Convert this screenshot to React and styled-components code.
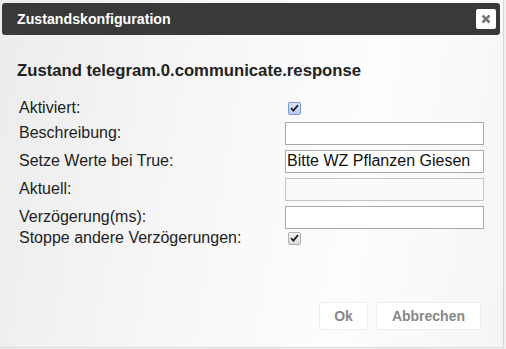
import styled, { createGlobalStyle } from "styled-components";

const Global = createGlobalStyle`
  html, body {
    margin: 0;
    padding: 0;
    background: #f0f0f0;
    font-family: "Liberation Sans", Arial, sans-serif;
  }
`;

const Dialog = styled.div`
  box-sizing: border-box;
  width: 504px;
  height: 348px;
  padding: 3px 3px 0 2px;
  border-right: 1px solid #d6d6d6;
  border-bottom: 1px solid #dcdcdc;
  background: linear-gradient(100deg, #ececec 0%, #f6f6f6 35%, #fdfdfd 70%, #f5f5f5 100%);
  display: flex;
  flex-direction: column;
`;

const TitleBar = styled.div`
  height: 32px;
  flex: none;
  background: #393939;
  border-radius: 3px;
  display: flex;
  align-items: center;
  justify-content: space-between;
  padding: 0 4px 0 15px;
  color: #fff;
  font-weight: bold;
  font-size: 14.2px;
`;

const CloseBtn = styled.div`
  width: 20px;
  height: 20px;
  background: #fff;
  border-radius: 2px;
  display: flex;
  align-items: center;
  justify-content: center;
`;

const Content = styled.div`
  flex: 1;
  padding: 26px 0 0 15px;
`;

const Heading = styled.div`
  font-size: 16.7px;
  font-weight: bold;
  color: #222;
  margin-bottom: 16px;
`;

const Form = styled.div`
  display: grid;
  grid-template-columns: 266px 199px;
  padding-left: 2px;
  color: #222;
  font-size: 16px;
`;

const Label = styled.div`
  display: flex;
  align-items: center;
  white-space: nowrap;
  height: ${(p) => p.$h}px;
`;

const Cell = styled.div`
  display: flex;
  align-items: center;
  height: ${(p) => p.$h}px;
`;

const Input = styled.div`
  box-sizing: border-box;
  width: 199px;
  height: 23px;
  border: 1px solid ${(p) => (p.$disabled ? "#c4c4c4" : "#a9a9a9")};
  background: ${(p) => (p.$disabled ? "#fafafa" : "#fff")};
  font-size: 16px;
  color: #111;
  padding: 0 1px;
  display: flex;
  align-items: center;
`;

const Check = styled.div`
  box-sizing: border-box;
  width: 13px;
  height: 13px;
  margin-left: 3px;
  border: 1px solid ${(p) => (p.$focus ? "#7e9ad4" : "#b0b0b0")};
  background: ${(p) =>
    p.$focus
      ? "linear-gradient(#d6e2f8, #b9cdf2)"
      : "linear-gradient(#f4f4f4, #dcdcdc)"};
  border-radius: 2px;
  display: flex;
  align-items: center;
  justify-content: center;
`;

const ButtonPane = styled.div`
  flex: none;
  display: flex;
  justify-content: flex-end;
  gap: 8px;
  padding: 0 19px 17px 0;
`;

const Button = styled.div`
  box-sizing: border-box;
  height: 28px;
  padding: 0 ${(p) => p.$pad}px;
  background: #fff;
  border: 1px solid #ececec;
  border-radius: 3px;
  color: #888;
  font-weight: bold;
  font-size: 14px;
  display: flex;
  align-items: center;
`;

const Tick = () => (
  <svg width="9" height="8" viewBox="0 0 9 8">
    <path d="M1 4.2 L3.4 6.6 L8 1.2" fill="none" stroke="#222" strokeWidth="1.8" />
  </svg>
);

const rows = [
  { label: "Aktiviert:", h: 22, type: "check", focus: true },
  { label: "Beschreibung:", h: 28, type: "input" },
  { label: "Setze Werte bei True:", h: 28, type: "input", value: "Bitte WZ Pflanzen Giesen" },
  { label: "Aktuell:", h: 28, type: "input", disabled: true },
  { label: "Verzögerung(ms):", h: 28, type: "input" },
  { label: "Stoppe andere Verzögerungen:", h: 14, type: "check" },
];

export default function App() {
  return (
    <>
      <Global />
      <Dialog>
        <TitleBar>
          <span>Zustandskonfiguration</span>
          <CloseBtn>
            <svg width="10" height="10" viewBox="0 0 10 10">
              <path d="M1.5 1.5 L8.5 8.5 M8.5 1.5 L1.5 8.5" stroke="#777" strokeWidth="2.6" />
            </svg>
          </CloseBtn>
        </TitleBar>
        <Content>
          <Heading>Zustand telegram.0.communicate.response</Heading>
          <Form>
            {rows.flatMap((r) => [
              <Label key={r.label + "l"} $h={r.h}>{r.label}</Label>,
              <Cell key={r.label + "c"} $h={r.h}>
                {r.type === "check" ? (
                  <Check $focus={r.focus}>
                    <Tick />
                  </Check>
                ) : (
                  <Input $disabled={r.disabled}>{r.value}</Input>
                )}
              </Cell>,
            ])}
          </Form>
        </Content>
        <ButtonPane>
          <Button $pad={14}>Ok</Button>
          <Button $pad={15}>Abbrechen</Button>
        </ButtonPane>
      </Dialog>
    </>
  );
}
